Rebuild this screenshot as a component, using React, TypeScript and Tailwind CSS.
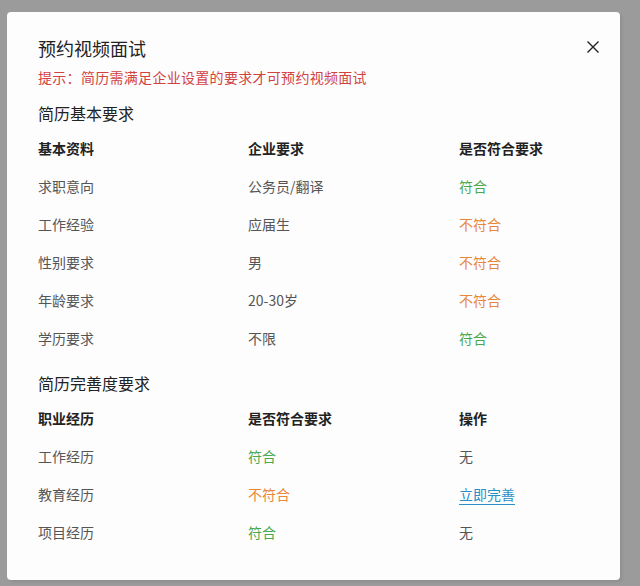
import React from "react";

const font = { fontFamily: '"Noto Sans CJK SC", "Noto Sans", sans-serif' };

type Cell = { t: string; c?: "g" | "o" | "l" | "n" };

const colorCls = (c?: string) =>
  c === "g"
    ? "text-[#4aa84e]"
    : c === "o"
    ? "text-[#e8873a]"
    : c === "l"
    ? "text-[#2a8fc4] underline underline-offset-4"
    : "text-[#555555]";

function Table({ head, rows }: { head: string[]; rows: Cell[][] }) {
  return (
    <div className="flex flex-col">
      <div className="grid grid-cols-[210px_211px_1fr] h-[38px] items-center text-[14px] font-bold text-[#222222]">
        {head.map((h) => (
          <div key={h}>{h}</div>
        ))}
      </div>
      {rows.map((r, i) => (
        <div key={i} className="grid grid-cols-[210px_211px_1fr] h-[38px] items-center text-[14px]">
          {r.map((c, j) => (
            <div key={j} className={colorCls(c.c)}>
              {c.t}
            </div>
          ))}
        </div>
      ))}
    </div>
  );
}

export default function App() {
  return (
    <div className="w-[640px] h-[586px] bg-[#9b9b9b] pt-[12px] pl-[7px]" style={font}>
      <div className="w-[613px] h-[568px] bg-[#fdfdfe] rounded-[4px] pt-[24px] pl-[31px] pr-[30px] relative shadow-[2px_2px_3px_rgba(0,0,0,0.08)]">
        <button className="absolute right-[21px] top-[29px] w-[12px] h-[12px]">
          <svg viewBox="0 0 12 12" width="12" height="12">
            <path d="M0.5 0.5 L11.5 11.5 M11.5 0.5 L0.5 11.5" stroke="#222" strokeWidth="1.4" />
          </svg>
        </button>
        <div className="text-[18px] leading-[24px] text-[#222222]">预约视频面试</div>
        <div className="mt-[7px] text-[14px] leading-[20px] text-[#d2433f] tracking-[0.3px]">
          提示：简历需满足企业设置的要求才可预约视频面试
        </div>
        <div className="mt-[14px] text-[16px] leading-[24px] text-[#222222]">简历基本要求</div>
        <div className="mt-[4px]">
          <Table
            head={["基本资料", "企业要求", "是否符合要求"]}
            rows={[
              [{ t: "求职意向" }, { t: "公务员/翻译" }, { t: "符合", c: "g" }],
              [{ t: "工作经验" }, { t: "应届生" }, { t: "不符合", c: "o" }],
              [{ t: "性别要求" }, { t: "男" }, { t: "不符合", c: "o" }],
              [{ t: "年龄要求" }, { t: "20-30岁" }, { t: "不符合", c: "o" }],
              [{ t: "学历要求" }, { t: "不限" }, { t: "符合", c: "g" }],
            ]}
          />
        </div>
        <div className="mt-[14px] text-[16px] leading-[24px] text-[#222222]">简历完善度要求</div>
        <div className="mt-[4px]">
          <Table
            head={["职业经历", "是否符合要求", "操作"]}
            rows={[
              [{ t: "工作经历" }, { t: "符合", c: "g" }, { t: "无" }],
              [{ t: "教育经历" }, { t: "不符合", c: "o" }, { t: "立即完善", c: "l" }],
              [{ t: "项目经历" }, { t: "符合", c: "g" }, { t: "无" }],
            ]}
          />
        </div>
      </div>
    </div>
  );
}
